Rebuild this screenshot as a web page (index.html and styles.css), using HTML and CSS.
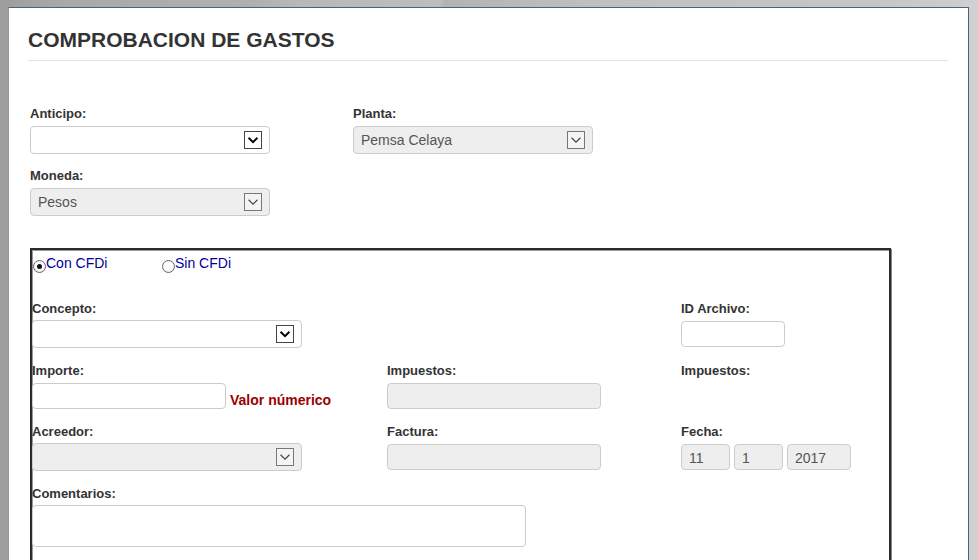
FILE: index.html
```html
<!DOCTYPE html>
<html lang="es">
<head>
<meta charset="utf-8">
<title>Comprobacion de gastos</title>
<link rel="stylesheet" href="styles.css">
</head>
<body>
<div class="panel">
  <h1 class="title">COMPROBACION DE GASTOS</h1>
  <hr class="rule">

  <div class="top-grid">
    <div class="field">
      <label class="lbl">Anticipo:</label>
      <div class="select">
        <span class="sel-text"></span>
        <span class="arrow"><svg viewBox="0 0 18 18" width="16" height="16"><path d="M4 6.5 L9 11.5 L14 6.5" fill="none" stroke="#000" stroke-width="2.2"/></svg></span>
      </div>
    </div>
    <div class="field">
      <label class="lbl">Planta:</label>
      <div class="select disabled">
        <span class="sel-text">Pemsa Celaya</span>
        <span class="arrow"><svg viewBox="0 0 18 18" width="16" height="16"><path d="M4 6.5 L9 11.5 L14 6.5" fill="none" stroke="#444" stroke-width="1.3"/></svg></span>
      </div>
    </div>
    <div class="field">
      <label class="lbl">Moneda:</label>
      <div class="select disabled">
        <span class="sel-text">Pesos</span>
        <span class="arrow"><svg viewBox="0 0 18 18" width="16" height="16"><path d="M4 6.5 L9 11.5 L14 6.5" fill="none" stroke="#444" stroke-width="1.3"/></svg></span>
      </div>
    </div>
  </div>

  <div class="box">
    <div class="radios">
      <span class="radio"><span class="dot checked"></span>Con CFDi</span>
      <span class="radio"><span class="dot"></span>Sin CFDi</span>
    </div>

    <div class="grid">
      <div class="field">
        <label class="lbl">Concepto:</label>
        <div class="select w270">
          <span class="sel-text"></span>
          <span class="arrow"><svg viewBox="0 0 18 18" width="16" height="16"><path d="M4 6.5 L9 11.5 L14 6.5" fill="none" stroke="#000" stroke-width="2.2"/></svg></span>
        </div>
      </div>
      <div class="field"></div>
      <div class="field">
        <label class="lbl">ID Archivo:</label>
        <input class="inp w104" type="text">
      </div>

      <div class="field">
        <label class="lbl">Importe:</label>
        <div class="inline">
          <input class="inp w194" type="text">
          <span class="err">Valor númerico</span>
        </div>
      </div>
      <div class="field">
        <label class="lbl">Impuestos:</label>
        <input class="inp w214" type="text" disabled>
      </div>
      <div class="field">
        <label class="lbl">Impuestos:</label>
      </div>

      <div class="field">
        <label class="lbl">Acreedor:</label>
        <div class="select disabled w270">
          <span class="sel-text"></span>
          <span class="arrow"><svg viewBox="0 0 18 18" width="16" height="16"><path d="M4 6.5 L9 11.5 L14 6.5" fill="none" stroke="#444" stroke-width="1.3"/></svg></span>
        </div>
      </div>
      <div class="field">
        <label class="lbl">Factura:</label>
        <input class="inp w214" type="text" disabled>
      </div>
      <div class="field">
        <label class="lbl">Fecha:</label>
        <div class="date">
          <input class="inp w49" type="text" value="11" disabled>
          <input class="inp w49" type="text" value="1" disabled>
          <input class="inp w64" type="text" value="2017" disabled>
        </div>
      </div>

      <div class="field span3">
        <label class="lbl">Comentarios:</label>
        <textarea class="txt"></textarea>
      </div>
    </div>
  </div>
</div>
</body>
</html>
```

FILE: styles.css
```css
* { box-sizing: border-box; }

html, body {
  margin: 0;
  height: 100%;
}

body {
  padding: 7px 0 0 8px;
  font-family: "Liberation Sans", Arial, sans-serif;
  color: #333;
  overflow: hidden;
  background:
    linear-gradient(90deg,
      #9d9d9d 0px, #a8a8a8 60px, #b0b0b0 240px, #aeaeae 245px,
      #b8b8b8 300px, #bdbdbd 440px, #b3b3b3 445px, #c0c0c0 600px,
      #c6c6c6 880px, #cdcdcd 960px, #d2d2d2 978px);
}

.panel {
  width: 961px;
  height: 553px;
  background: #fff;
  border-top: 1px solid #4b637b;
  border-right: 1px solid #4b637b;
  border-left: 1px solid #9a9a9a;
  padding: 20px 20px 0 19px;
  overflow: hidden;
}

.title {
  margin: 0;
  font-size: 21px;
  line-height: 24px;
  font-weight: bold;
  color: #333;
}

.rule {
  margin: 8px 0 0;
  border: 0;
  border-top: 1px solid #e3e3e3;
  height: 0;
}

.top-grid {
  display: grid;
  grid-template-columns: 323px 240px;
  row-gap: 14px;
  margin: 45px 0 0 2px;
}

.field {
  display: flex;
  flex-direction: column;
  align-items: flex-start;
}

.lbl {
  font-size: 13px;
  line-height: 16px;
  font-weight: bold;
  color: #333;
  margin-bottom: 4px;
}

.select {
  width: 240px;
  height: 28px;
  border: 1px solid #ccc;
  border-radius: 4px;
  background: #fff;
  display: flex;
  align-items: center;
  justify-content: space-between;
  padding: 0 7px 0 7px;
}

.select.disabled {
  background: #eee;
}

.sel-text {
  font-size: 14px;
  color: #555;
}

.arrow {
  width: 18px;
  height: 18px;
  border: 1px solid #444;
  background: #fff;
  display: flex;
  align-items: center;
  justify-content: center;
}

.select.disabled .arrow {
  border-color: #777;
  background: #f4f4f4;
}

.box {
  margin: 32px 0 0 2px;
  width: 861px;
  height: 400px;
  border: 2px solid #2b2b2b;
  box-shadow: 1px 1px 0 #888, inset 1px 1px 0 #999;
  padding: 5px 0 0 0;
}

.radios {
  display: flex;
  height: 16px;
  padding-left: 1px;
}

.radio {
  display: inline-flex;
  align-items: flex-start;
  font-size: 14px;
  line-height: 16px;
  color: #000099;
  width: 129px;
}

.dot {
  width: 13px;
  height: 13px;
  border-radius: 50%;
  border: 1px solid #666;
  background: radial-gradient(circle at 50% 40%, #fff 40%, #e4e4e4 100%);
  margin-top: 5px;
  position: relative;
  flex: none;
}

.dot.checked::after {
  content: "";
  position: absolute;
  left: 3px;
  top: 3px;
  width: 5px;
  height: 5px;
  border-radius: 50%;
  background: #111;
}

.grid {
  display: grid;
  grid-template-columns: 355px 294px 1fr;
  row-gap: 15px;
  margin-top: 30px;
}

.grid .lbl {
  margin-bottom: 3px;
}

.span3 {
  grid-column: 1 / 4;
}

.inp {
  height: 26px;
  margin-top: 1px;
  border: 1px solid #ccc;
  border-radius: 4px;
  background: #fff;
  font-family: "Liberation Sans", Arial, sans-serif;
  font-size: 14px;
  color: #555;
  padding: 2px 7px 0;
  outline: none;
}

.inp:disabled {
  background: #eee;
  color: #555;
}

.w270 { width: 270px; }
.w104 { width: 104px; }
.w194 { width: 194px; }
.w214 { width: 214px; }
.w49 { width: 49px; }
.w64 { width: 64px; }

.inline {
  display: flex;
  align-items: flex-end;
}

.err {
  font-size: 14px;
  font-weight: bold;
  color: #990000;
  margin-left: 4px;
  line-height: 16px;
  margin-bottom: 1px;
}

.date {
  display: flex;
  gap: 4px;
}

.txt {
  width: 494px;
  height: 42px;
  border: 1px solid #ccc;
  border-radius: 4px;
  resize: none;
  margin: 0;
  display: block;
}
```
